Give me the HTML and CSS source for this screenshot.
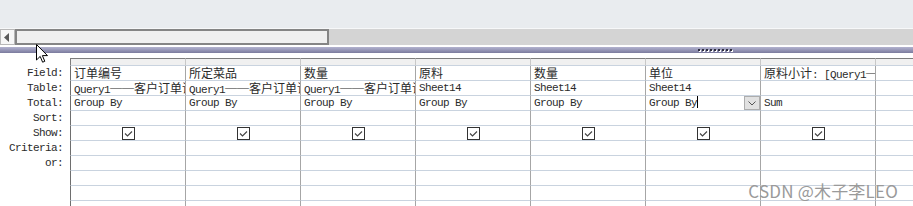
FILE: index.html
```html
<!DOCTYPE html>
<html>
<head>
<meta charset="utf-8">
<link rel="stylesheet" href="styles.css">
</head>
<body>
<div class="screen">
  <div class="toparea"></div>
  <div class="hscroll">
    <div class="sb-btn"><svg width="6" height="9" viewBox="0 0 6 9"><path d="M5 0 L5 9 L0 4.5 Z" fill="#5a5a5a"/></svg></div>
    <div class="sb-thumb"></div>
    <div class="sb-track"></div>
  </div>
  <div class="splitter">
    <div class="grip"><i></i><i></i><i></i><i></i><i></i><i></i><i></i><i></i><i></i></div>
  </div>
  <div class="design">
    <div class="row head">
      <div class="lbl"></div><div class="c first"></div><div class="c"></div><div class="c"></div><div class="c"></div><div class="c"></div><div class="c"></div><div class="c"></div><div class="c last"></div>
    </div>
    <div class="row">
      <div class="lbl">Field:</div>
      <div class="c first"><span class="cj">订单编号</span></div>
      <div class="c"><span class="cj">所定菜品</span></div>
      <div class="c"><span class="cj">数量</span></div>
      <div class="c"><span class="cj">原料</span></div>
      <div class="c"><span class="cj">数量</span></div>
      <div class="c"><span class="cj">单位</span></div>
      <div class="c"><span class="cj">原料小计</span>: [Query1<span class="dash">—</span></div>
      <div class="c last"></div>
    </div>
    <div class="row">
      <div class="lbl">Table:</div>
      <div class="c first">Query1<span class="dash">——</span><span class="cj">客户订单详</span></div>
      <div class="c">Query1<span class="dash">——</span><span class="cj">客户订单详</span></div>
      <div class="c">Query1<span class="dash">——</span><span class="cj">客户订单详</span></div>
      <div class="c">Sheet14</div>
      <div class="c">Sheet14</div>
      <div class="c">Sheet14</div>
      <div class="c"></div>
      <div class="c last"></div>
    </div>
    <div class="row">
      <div class="lbl">Total:</div>
      <div class="c first">Group By</div>
      <div class="c">Group By</div>
      <div class="c">Group By</div>
      <div class="c">Group By</div>
      <div class="c">Group By</div>
      <div class="c active"><span class="txt">Group By<span class="caret"></span></span><span class="dd"><svg width="14" height="12" viewBox="0 0 14 12"><path d="M3.5 4.5 L7 8 L10.5 4.5" fill="none" stroke="#555" stroke-width="1"/></svg></span></div>
      <div class="c">Sum</div>
      <div class="c last"></div>
    </div>
    <div class="row">
      <div class="lbl">Sort:</div>
      <div class="c first"></div><div class="c"></div><div class="c"></div><div class="c"></div><div class="c"></div><div class="c"></div><div class="c"></div><div class="c last"></div>
    </div>
    <div class="row">
      <div class="lbl">Show:</div>
      <div class="c first chk"><svg class="box" width="13" height="13" viewBox="0 0 13 13"><rect x="0.5" y="0.5" width="12" height="12" fill="#fff" stroke="#333"/><path d="M3 6.5 L5.5 9 L10 4.5" fill="none" stroke="#444" stroke-width="1.1"/></svg></div>
      <div class="c chk"><svg class="box" width="13" height="13" viewBox="0 0 13 13"><rect x="0.5" y="0.5" width="12" height="12" fill="#fff" stroke="#333"/><path d="M3 6.5 L5.5 9 L10 4.5" fill="none" stroke="#444" stroke-width="1.1"/></svg></div>
      <div class="c chk"><svg class="box" width="13" height="13" viewBox="0 0 13 13"><rect x="0.5" y="0.5" width="12" height="12" fill="#fff" stroke="#333"/><path d="M3 6.5 L5.5 9 L10 4.5" fill="none" stroke="#444" stroke-width="1.1"/></svg></div>
      <div class="c chk"><svg class="box" width="13" height="13" viewBox="0 0 13 13"><rect x="0.5" y="0.5" width="12" height="12" fill="#fff" stroke="#333"/><path d="M3 6.5 L5.5 9 L10 4.5" fill="none" stroke="#444" stroke-width="1.1"/></svg></div>
      <div class="c chk"><svg class="box" width="13" height="13" viewBox="0 0 13 13"><rect x="0.5" y="0.5" width="12" height="12" fill="#fff" stroke="#333"/><path d="M3 6.5 L5.5 9 L10 4.5" fill="none" stroke="#444" stroke-width="1.1"/></svg></div>
      <div class="c chk"><svg class="box" width="13" height="13" viewBox="0 0 13 13"><rect x="0.5" y="0.5" width="12" height="12" fill="#fff" stroke="#333"/><path d="M3 6.5 L5.5 9 L10 4.5" fill="none" stroke="#444" stroke-width="1.1"/></svg></div>
      <div class="c chk"><svg class="box" width="13" height="13" viewBox="0 0 13 13"><rect x="0.5" y="0.5" width="12" height="12" fill="#fff" stroke="#333"/><path d="M3 6.5 L5.5 9 L10 4.5" fill="none" stroke="#444" stroke-width="1.1"/></svg></div>
      <div class="c last"></div>
    </div>
    <div class="row">
      <div class="lbl">Criteria:</div>
      <div class="c first"></div><div class="c"></div><div class="c"></div><div class="c"></div><div class="c"></div><div class="c"></div><div class="c"></div><div class="c last"></div>
    </div>
    <div class="row">
      <div class="lbl">or:</div>
      <div class="c first"></div><div class="c"></div><div class="c"></div><div class="c"></div><div class="c"></div><div class="c"></div><div class="c"></div><div class="c last"></div>
    </div>
    <div class="row">
      <div class="lbl"></div>
      <div class="c first"></div><div class="c"></div><div class="c"></div><div class="c"></div><div class="c"></div><div class="c"></div><div class="c"></div><div class="c last"></div>
    </div>
    <div class="row">
      <div class="lbl"></div>
      <div class="c first"></div><div class="c"></div><div class="c"></div><div class="c"></div><div class="c"></div><div class="c"></div><div class="c"></div><div class="c last"></div>
    </div>
    <div class="row">
      <div class="lbl"></div>
      <div class="c first"></div><div class="c"></div><div class="c"></div><div class="c"></div><div class="c"></div><div class="c"></div><div class="c"></div><div class="c last"></div>
    </div>
  </div>
  <svg class="cursor" width="13" height="20" viewBox="0 0 13 20"><path d="M0.5 0.5 L0.5 16 L4.2 12.4 L6.6 18.2 L8.8 17.3 L6.4 11.6 L11.5 11.6 Z" fill="#fff" stroke="#000" stroke-width="1" stroke-linejoin="round"/></svg>
  <div class="watermark">CSDN @木子李LEO</div>
</div>
</body>
</html>
```

FILE: styles.css
```css
html, body {
  margin: 0;
  padding: 0;
  background: #fff;
}

.screen {
  position: relative;
  width: 913px;
  height: 206px;
  overflow: hidden;
  font-family: "Liberation Mono", "Noto Sans CJK SC", monospace;
  font-size: 11px;
  letter-spacing: -0.6px;
  color: #2a2a2a;
}

.toparea {
  height: 28px;
  background: #e9ecef;
  border-bottom: 1px solid #f7f8f9;
}

.hscroll {
  display: flex;
  height: 16px;
  background: #d4d4d4;
}

.sb-btn {
  width: 15px;
  box-sizing: border-box;
  background: #f7f7f7;
  border: 1px solid #b8b8b8;
  display: flex;
  align-items: center;
  justify-content: center;
  padding-right: 2px;
}

.sb-thumb {
  width: 314px;
  box-sizing: border-box;
  background: #f0f0f0;
  border: 2px solid #858585;
}

.sb-track {
  flex: 1;
  background: #d4d4d4;
}

.splitter {
  margin-top: 2px;
  height: 6px;
  background: linear-gradient(to bottom, #b3b3cf 0%, #9a9aba 45%, #7b7b9d 100%);
  display: flex;
  align-items: center;
  padding-left: 698px;
}

.grip {
  display: flex;
  gap: 2px;
}

.grip i {
  display: block;
  width: 2px;
  height: 2px;
  background: #2e2e3e;
  box-shadow: 1px 1px 0 #fff;
}

.design {
  margin-top: 5px;
}

.row {
  display: grid;
  grid-template-columns: 70px 116px repeat(6, 115px) 1fr;
  height: 15px;
}

.lbl {
  text-align: right;
  padding-right: 7px;
  line-height: 14px;
  white-space: nowrap;
}

.c {
  box-sizing: border-box;
  border-right: 1px solid #a6a6a6;
  border-bottom: 1px solid #c9d3df;
  padding-left: 3px;
  line-height: 14px;
  white-space: nowrap;
  overflow: hidden;
}

.c.first {
  border-left: 1px solid #6e6e6e;
}

.c.last {
  border-right: none;
}

.row.head {
  height: 8px;
}

.row.head .c {
  background: #f0f0f0;
  border-top: 1px solid #7c7c7c;
  border-right-color: #c8c8c8;
}

.row.head .c.first {
  border-left-color: #7c7c7c;
}

.cj {
  font-family: "Noto Sans CJK SC", sans-serif;
  font-size: 12px;
  letter-spacing: 0;
  line-height: 14px;
}

.dash {
  font-family: "Liberation Serif", serif;
  font-size: 12px;
  letter-spacing: 0;
  line-height: 10px;
  position: relative;
  top: -2px;
}

.c.active {
  display: flex;
  align-items: center;
}

.caret {
  display: inline-block;
  width: 1px;
  height: 12px;
  vertical-align: -2px;
  background: #000;
}

.dd {
  margin-left: auto;
  width: 16px;
  height: 14px;
  box-sizing: border-box;
  background: #e1e1e1;
  border: 1px solid #adadad;
  display: flex;
  align-items: center;
  justify-content: center;
}

.chk {
  display: flex;
  align-items: center;
  justify-content: center;
  padding-left: 0;
}

.cursor {
  position: absolute;
  left: 36px;
  top: 44px;
}

.watermark {
  position: absolute;
  right: 15px;
  bottom: 5px;
  font-family: "Noto Sans CJK SC", sans-serif;
  font-size: 17px;
  letter-spacing: 0.2px;
  line-height: 20px;
  color: #9a9a9a;
  white-space: nowrap;
}
```
